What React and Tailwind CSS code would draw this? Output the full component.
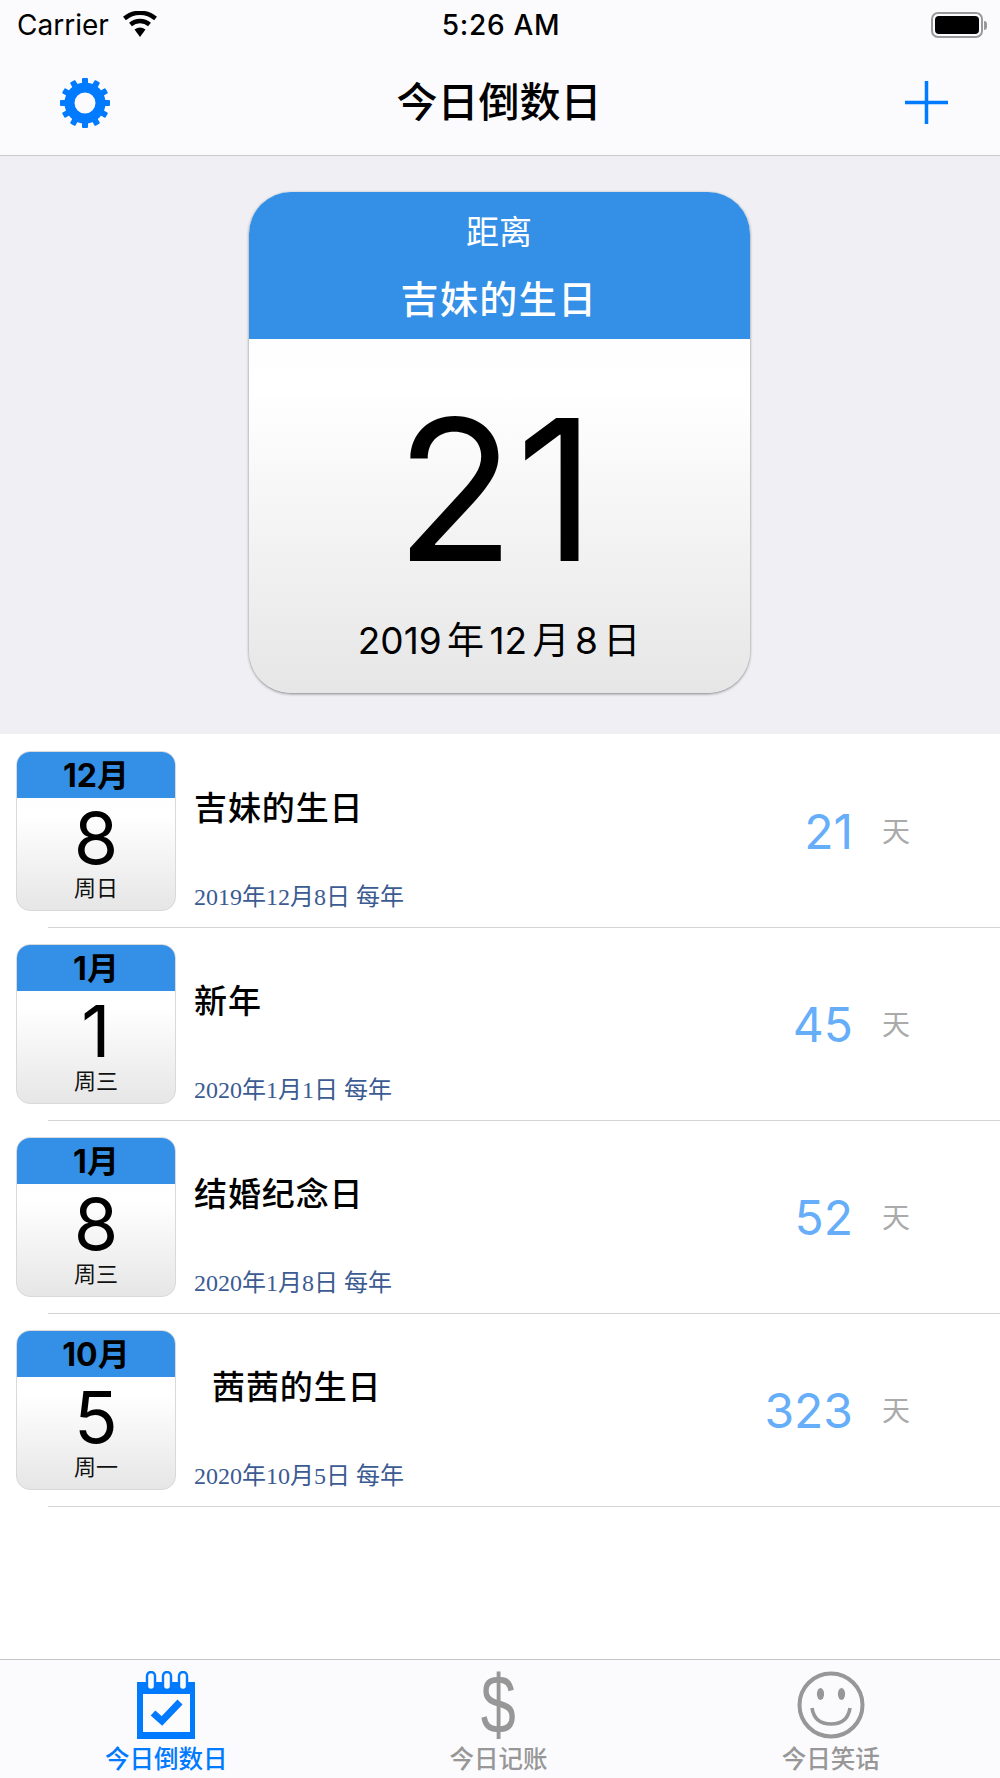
const rows = [
  { month: "12月", day: "8", week: "周日", title: "吉妹的生日", date: "2019年12月8日 每年", count: "21" },
  { month: "1月", day: "1", week: "周三", title: "新年", date: "2020年1月1日 每年", count: "45" },
  { month: "1月", day: "8", week: "周三", title: "结婚纪念日", date: "2020年1月8日 每年", count: "52" },
  { month: "10月", day: "5", week: "周一", title: "茜茜的生日", date: "2020年10月5日 每年", count: "323", indent: true },
];

function GearIcon() {
  const teeth = [0, 30, 60, 90, 120, 150, 180, 210, 240, 270, 300, 330];
  return (
    <svg width="52" height="50" viewBox="0 0 52 50" className="block">
      <g transform="translate(26 25)">
        {teeth.map((a) => (
          <rect key={a} x="-3" y="-25" width="6" height="8" rx="1" fill="#007aff" transform={`rotate(${a})`} />
        ))}
        <circle r="15.5" fill="none" stroke="#007aff" strokeWidth="10" />
      </g>
    </svg>
  );
}

function WifiIcon() {
  return (
    <svg width="36" height="26" viewBox="0 0 36 26" className="block">
      <path d="M18 26 L12.5 18.5 A9 9 0 0 1 23.5 18.5 Z" fill="#000" />
      <path d="M8.5 13.5 A15 15 0 0 1 27.5 13.5" fill="none" stroke="#000" strokeWidth="4.5" />
      <path d="M2.5 7.5 A24 24 0 0 1 33.5 7.5" fill="none" stroke="#000" strokeWidth="4.5" />
    </svg>
  );
}

function CalendarTabIcon() {
  return (
    <svg width="58" height="68" viewBox="0 0 58 68" className="block">
      <path d="M0 11 H58 V68 H0 Z" fill="#007aff" />
      <rect x="6" y="23" width="47" height="38" fill="#fcfcfd" />
      {[10, 26, 42].map((x) => (
        <rect key={x} x={x} y="1" width="8" height="18" rx="4" fill="#fcfcfd" stroke="#007aff" strokeWidth="2.4" />
      ))}
      <path d="M16 42 L25 50 L43 31" fill="none" stroke="#007aff" strokeWidth="7" />
    </svg>
  );
}

function SmileIcon() {
  return (
    <svg width="68" height="68" viewBox="0 0 68 68" className="block">
      <circle cx="34" cy="34" r="31.5" fill="none" stroke="#979797" strokeWidth="4" />
      <ellipse cx="23.5" cy="23" rx="3.6" ry="6" fill="#979797" />
      <ellipse cx="44.5" cy="23" rx="3.6" ry="6" fill="#979797" />
      <path d="M15 37 C17 50 26 53 34 53 C42 53 51 50 53 37" fill="none" stroke="#979797" strokeWidth="3.6" />
    </svg>
  );
}

function DateBadge({ month, day, week }) {
  return (
    <div className="w-[160px] h-[160px] shrink-0 rounded-[14px] overflow-hidden border border-[#d9d9d9] flex flex-col bg-gradient-to-b from-[#fafafa] via-white via-40% to-[#e6e6e6]">
      <div className="h-[46px] bg-[#348fe6] flex items-center justify-center text-[32px] leading-none font-bold text-black -mx-px pt-px">
        {month}
      </div>
      <div className="h-[72px] flex justify-center text-[72px] leading-[62px] text-black pt-[9px]">{day}</div>
      <div className="flex-1 flex justify-center text-[22px] leading-[30px] pt-[3px] text-[#111]">{week}</div>
    </div>
  );
}

function EventRow({ month, day, week, title, date, count, indent }) {
  return (
    <div className="h-[193px] relative flex pl-[16px] pt-[16px]">
      <DateBadge month={month} day={day} week={week} />
      <div className="ml-[18px] flex-1 flex flex-col">
        <div className={`text-[33px] leading-[40px] mt-[37px] text-black font-medium tracking-[0.9px] ${indent ? "pl-[18px]" : ""}`}>{title}</div>
        <div className="mt-[54px] text-[24px] leading-[30px] text-[#3b5b92] font-['Liberation_Serif','Noto_Sans_CJK_SC',serif]">
          {date}
        </div>
      </div>
      <div className="w-[220px] mr-[89px] flex items-start justify-end mt-[52px]">
        <span className="text-[48px] leading-[58px] text-[#66aef9]">{count}</span>
        <span className="ml-[29px] w-[29px] text-[28px] leading-[58px] text-[#aaaaaa]">天</span>
      </div>
      <div className="absolute left-[48px] right-0 bottom-0 h-px bg-[#d4d4d4]"></div>
    </div>
  );
}

export default function App() {
  return (
    <div className="w-[1000px] h-[1778px] flex flex-col bg-white overflow-hidden font-['Inter','Noto_Sans_CJK_SC',sans-serif]">
      <header className="h-[156px] shrink-0 bg-[#fbfbfd] border-b border-[#c9c9cc] flex flex-col">
        <div className="h-[50px] grid grid-cols-3 items-center pl-[17px] pr-[13px]">
          <div className="flex items-center">
            <span className="text-[28px] leading-none text-black">Carrier</span>
            <span className="ml-[13px] -mt-[2px]"><WifiIcon /></span>
          </div>
          <span className="text-center text-[28px] leading-none font-medium text-black tracking-wide pr-[2px]">5:26 AM</span>
          <div className="flex items-center justify-end">
            <div className="w-[52px] h-[26px] rounded-[7px] border-2 border-[#999] p-[2px]">
              <div className="w-full h-full rounded-[4px] bg-black"></div>
            </div>
            <div className="w-[3px] h-[9px] ml-px rounded-r-sm bg-[#999]"></div>
          </div>
        </div>
        <nav className="flex-1 grid grid-cols-3 items-center pl-[59px] pr-[52px]">
          <GearIcon />
          <h1 className="text-[41px] leading-none font-medium text-black text-center whitespace-nowrap -ml-[9px]">今日倒数日</h1>
          <svg width="43" height="43" viewBox="0 0 43 43" className="block justify-self-end">
            <path d="M21.5 0 V43 M0 21.5 H43" stroke="#007aff" strokeWidth="3.5" />
          </svg>
        </nav>
      </header>

      <section className="h-[578px] shrink-0 bg-[#efeff4] flex justify-center pt-[36px] pr-[2px]">
        <div className="w-[501px] h-[501px] rounded-[42px] overflow-hidden flex flex-col bg-gradient-to-b from-[#f9f9f9] via-white via-40% to-[#e6e6e6] shadow-[0_1px_3px_rgba(0,0,0,0.45)]">
          <div className="h-[147px] shrink-0 bg-[#348fe6] flex flex-col items-center text-white">
            <div className="text-[33px] leading-[40px] mt-[20px]">距离</div>
            <div className="text-[38px] leading-[46px] mt-[24px] font-medium tracking-[1.4px]">吉妹的生日</div>
          </div>
          <div className="h-[258px] flex items-center justify-center text-[196px] leading-none text-black pt-[44px] pr-[6px] tracking-[1px]">21</div>
          <div className="text-center text-[37px] leading-[46px] text-black mt-[21px] [word-spacing:-5px]">2019 年 12 月 8 日</div>
        </div>
      </section>

      <main className="flex-1 pt-px">
        {rows.map((r) => (
          <EventRow key={r.title} {...r} />
        ))}
      </main>

      <footer className="h-[119px] shrink-0 bg-[#fbfbfd] border-t border-[#c4c4c4] grid grid-cols-3 pr-[3px]">
        <div className="flex flex-col items-center">
          <div className="mt-[11px] h-[68px]"><CalendarTabIcon /></div>
          <div className="mt-[6px] text-[24.5px] leading-[28px] text-[#007aff] font-medium">今日倒数日</div>
        </div>
        <div className="flex flex-col items-center">
          <div className="mt-[8px] h-[72px] text-[84px] leading-[72px] text-[#979797] scale-x-75 font-['Liberation_Sans',sans-serif]">$</div>
          <div className="mt-[5px] text-[24.5px] leading-[28px] text-[#979797] font-medium">今日记账</div>
        </div>
        <div className="flex flex-col items-center">
          <div className="mt-[11px] h-[69px]"><SmileIcon /></div>
          <div className="mt-[5px] text-[24.5px] leading-[28px] text-[#979797] font-medium">今日笑话</div>
        </div>
      </footer>
    </div>
  );
}
